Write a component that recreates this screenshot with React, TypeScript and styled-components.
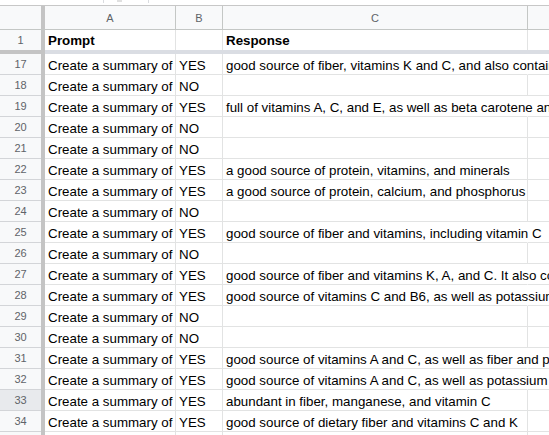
import React from 'react'
import styled, { createGlobalStyle } from 'styled-components'

const GlobalStyle = createGlobalStyle`
  html, body {
    margin: 0;
    padding: 0;
    background: #fff;
    overflow: hidden;
  }
  body {
    font-family: "Liberation Sans", Arial, sans-serif;
  }
`

const COLS = '41px 4px 131px 47px 305px 1fr'

const Sheet = styled.div`
  width: 549px;
  height: 435px;
  overflow: hidden;
  background: #fff;
`

const TopStrip = styled.div`
  height: 6px;
  box-sizing: border-box;
  border-bottom: 1px solid #c7c7c7;
  padding-left: 103px;
  display: flex;
`

const TabStub = styled.div`
  width: 44px;
  height: 3px;
  border-left: 1px solid #dadce0;
  border-right: 1px solid #dadce0;
  display: flex;
  justify-content: center;

  &::after {
    content: '';
    width: 5px;
    height: 2px;
    margin-left: -14px;
    background: #e0e0e0;
  }
`

const HeaderRow = styled.div`
  display: grid;
  grid-template-columns: ${COLS};
  height: 24px;
  box-sizing: border-box;
  background: #f8f9fa;
  border-bottom: 1px solid #c4c7c5;
`

const ColLetter = styled.div<{ $last?: boolean }>`
  display: flex;
  align-items: center;
  justify-content: center;
  font-size: 11px;
  color: #5f6368;
  border-right: ${({ $last }) => ($last ? 'none' : '1px solid #c4c7c5')};
`

const FrozenV = styled.div`
  background: #c4c4c4;
`

const Row = styled.div<{ $first?: boolean }>`
  display: grid;
  grid-template-columns: ${COLS};
  height: ${({ $first }) => ($first ? '20px' : '21px')};
  box-sizing: border-box;
`

const RowNum = styled.div<{ $active?: boolean; $first?: boolean }>`
  display: flex;
  align-items: center;
  justify-content: center;
  font-size: 11px;
  color: #5f6368;
  background: ${({ $active }) => ($active ? '#e8eaed' : '#f8f9fa')};
  border-bottom: ${({ $first }) => ($first ? 'none' : '1px solid #d3d5d8')};
`

const Cell = styled.div<{ $bold?: boolean; $first?: boolean; $spill?: boolean }>`
  display: flex;
  align-items: flex-end;
  padding: 0 3px ${({ $first }) => ($first ? '2px' : '1px')};
  font-size: 10pt;
  font-weight: ${({ $bold }) => ($bold ? 700 : 400)};
  color: #000;
  white-space: nowrap;
  overflow: ${({ $spill }) => ($spill ? 'visible' : 'hidden')};
  position: relative;
  z-index: 1;
  border-right: 1px solid ${({ $spill }) => ($spill ? 'transparent' : '#e2e3e3')};
  border-bottom: ${({ $first }) => ($first ? 'none' : '1px solid #e2e3e3')};
`

const EmptyCell = styled.div<{ $first?: boolean }>`
  border-bottom: ${({ $first }) => ($first ? 'none' : '1px solid #e2e3e3')};
`

const FrozenH = styled.div`
  display: grid;
  grid-template-columns: 45px 1fr;
  height: 4px;
`

const FrozenHHead = styled.div`
  background: #c4c4c4;
`

const FrozenHBody = styled.div`
  background: #dadde3;
`

type Entry = [number, string, string, boolean?]

const rows: Entry[] = [
  [17, 'YES', 'good source of fiber, vitamins K and C, and also contains manganese', true],
  [18, 'NO', ''],
  [19, 'YES', 'full of vitamins A, C, and E, as well as beta carotene and fiber', true],
  [20, 'NO', ''],
  [21, 'NO', ''],
  [22, 'YES', 'a good source of protein, vitamins, and minerals'],
  [23, 'YES', 'a good source of protein, calcium, and phosphorus'],
  [24, 'NO', ''],
  [25, 'YES', 'good source of fiber and vitamins, including vitamin C', true],
  [26, 'NO', ''],
  [27, 'YES', 'good source of fiber and vitamins K, A, and C. It also contains', true],
  [28, 'YES', 'good source of vitamins C and B6, as well as potassium', true],
  [29, 'NO', ''],
  [30, 'NO', ''],
  [31, 'YES', 'good source of vitamins A and C, as well as fiber and potassium', true],
  [32, 'YES', 'good source of vitamins A and C, as well as potassium and fiber', true],
  [33, 'YES', 'abundant in fiber, manganese, and vitamin C'],
  [34, 'YES', 'good source of dietary fiber and vitamins C and K'],
  [35, '', ''],
]

const App = () => {
  return (
    <>
      <GlobalStyle />
      <Sheet>
        <TopStrip>
          <TabStub />
        </TopStrip>

        <HeaderRow>
          <ColLetter $last />
          <FrozenV />
          <ColLetter>A</ColLetter>
          <ColLetter>B</ColLetter>
          <ColLetter>C</ColLetter>
          <ColLetter $last />
        </HeaderRow>

        <Row $first>
          <RowNum $first>1</RowNum>
          <FrozenV />
          <Cell $first $bold>Prompt</Cell>
          <Cell $first />
          <Cell $first $bold>Response</Cell>
          <EmptyCell $first />
        </Row>

        <FrozenH>
          <FrozenHHead />
          <FrozenHBody />
        </FrozenH>

        {rows.map(([num, flag, text, spill]) => (
          <Row key={num}>
            <RowNum $active={num === 33}>{num}</RowNum>
            <FrozenV />
            <Cell>{flag ? 'Create a summary of' : ''}</Cell>
            <Cell>{flag}</Cell>
            <Cell $spill={spill}>{text}</Cell>
            <EmptyCell />
          </Row>
        ))}
      </Sheet>
    </>
  )
}

export default App
